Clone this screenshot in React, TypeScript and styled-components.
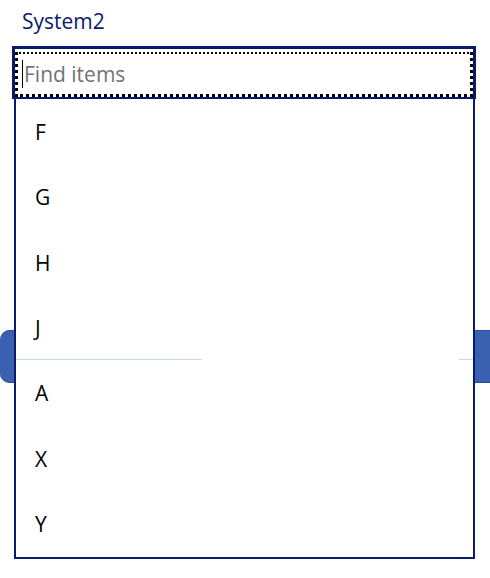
import React from "react";
import styled, { createGlobalStyle } from "styled-components";

const Global = createGlobalStyle`
  html, body { margin: 0; padding: 0; background: #ffffff; }
  body { font-family: "Open Sans", "Noto Sans", sans-serif; }
`;

const NAVY = "#0a1a6c";

const Page = styled.div`
  position: relative;
  width: 490px;
  height: 578px;
  overflow: hidden;
  background: #ffffff;
`;

const Label = styled.div`
  height: 46px;
  padding-left: 22px;
  line-height: 42px;
  font-size: 21px;
  color: ${NAVY};
`;

const SearchBox = styled.div`
  margin-left: 12px;
  width: 464px;
  height: 53px;
  box-sizing: border-box;
  border: solid ${NAVY};
  border-width: 3px 3px 2px 3px;
  padding-top: 3px;
  background: #ffffff;
`;

const SearchField = styled.div`
  height: 45px;
  box-sizing: border-box;
  border: dotted #000000;
  border-width: 2px 3px 3px 3px;
  display: flex;
  align-items: center;
  padding-left: 4px;
`;

const Caret = styled.span`
  width: 1px;
  height: 28px;
  background: #000000;
  margin-right: 1px;
`;

const Placeholder = styled.span`
  font-size: 21px;
  color: #737373;
`;

const Content = styled.div`
  padding-top: 231px;
`;

const BackButton = styled.div`
  height: 53px;
  margin-right: -30px;
  border-radius: 10px;
  background: #3a60b1;
  box-shadow: inset 0 1px 0 #2c4d96, inset 0 -1px 0 #2c4d96;
`;

const ListPopup = styled.div`
  position: absolute;
  left: 14px;
  top: 99px;
  width: 461px;
  height: 460px;
  box-sizing: border-box;
  border: 2px solid ${NAVY};
  border-top: none;
  background: #ffffff;
  display: flex;
  flex-direction: column;
`;

const Item = styled.div<{ $rule?: boolean }>`
  position: relative;
  flex: 1;
  display: flex;
  align-items: center;
  padding-left: 19px;
  font-size: 21px;
  color: #000000;
  &::after {
    content: "";
    display: ${(p) => (p.$rule ? "block" : "none")};
    position: absolute;
    left: 0;
    right: 0;
    bottom: 1px;
    height: 1px;
    background: linear-gradient(
      to right,
      #c6daee 0,
      #c6daee 186px,
      transparent 186px,
      transparent 443px,
      #c6daee 443px
    );
  }
`;

const items = ["F", "G", "H", "J", "A", "X", "Y"];

export default function App() {
  return (
    <Page>
      <Global />
      <Label>System2</Label>
      <SearchBox>
        <SearchField>
          <Caret />
          <Placeholder>Find items</Placeholder>
        </SearchField>
      </SearchBox>
      <Content>
        <BackButton />
      </Content>
      <ListPopup>
        {items.map((it) => (
          <Item key={it} $rule={it === "J"}>
            {it}
          </Item>
        ))}
      </ListPopup>
    </Page>
  );
}
